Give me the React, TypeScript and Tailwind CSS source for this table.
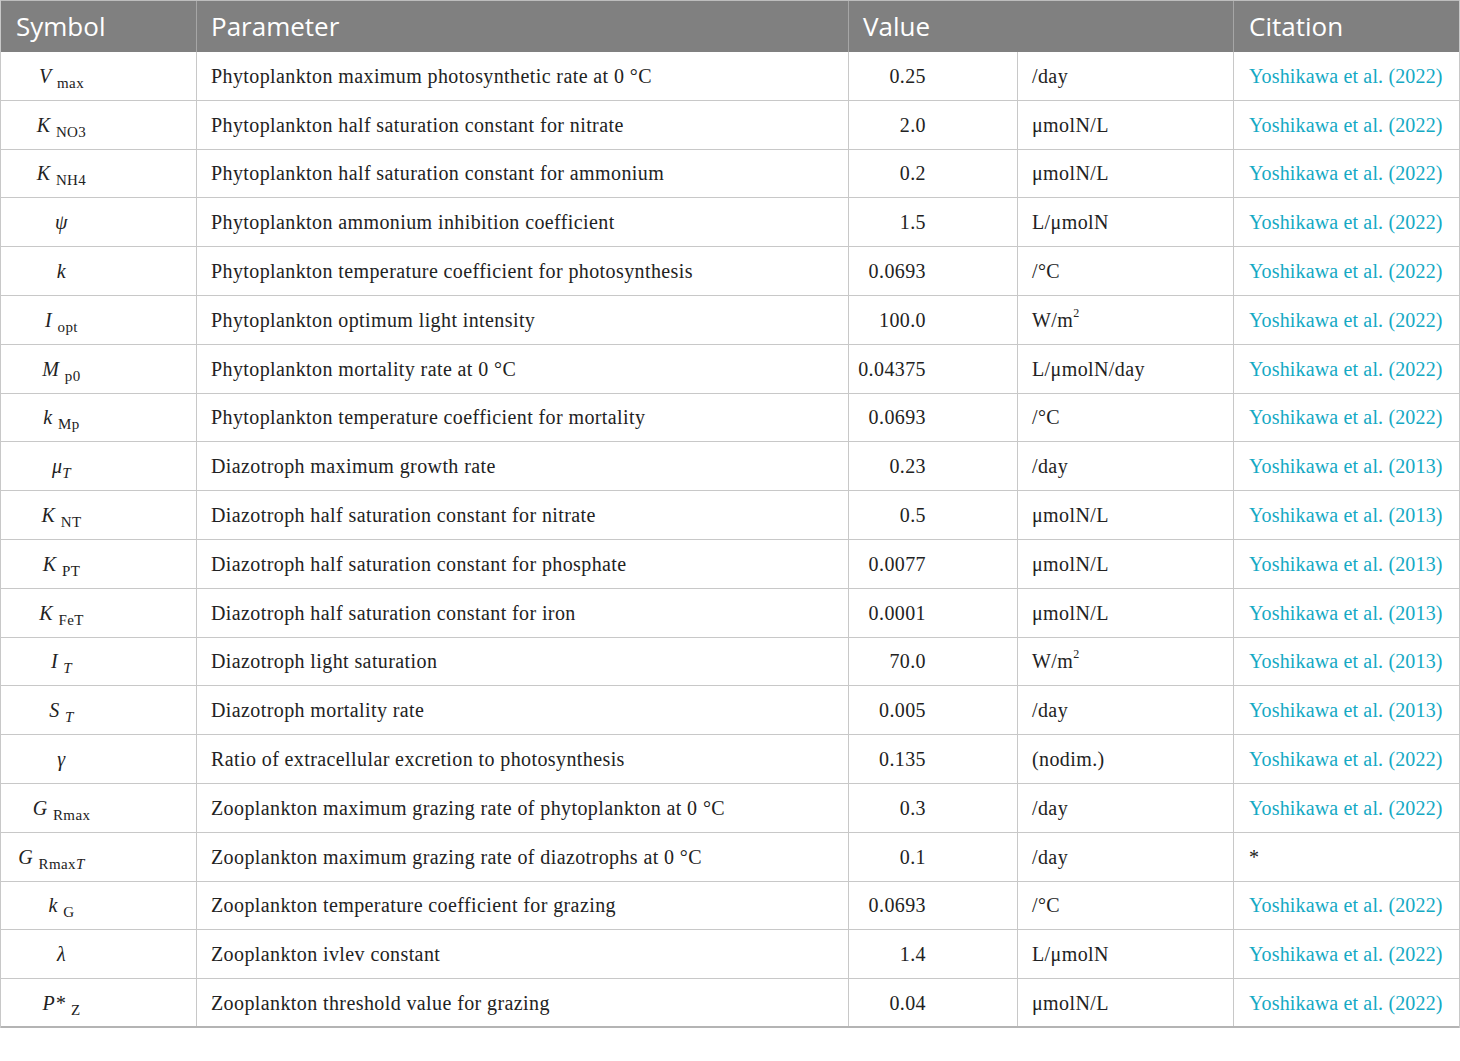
import { ReactNode } from 'react';

// --- Data ---

type Row = {
  symbol: ReactNode;
  param: string;
  value: string;
  unit: ReactNode;
  cite: string;
  shift?: string;
};

const Sub = ({ children }: { children: ReactNode }) => (
  <span className="relative top-[5px] text-[15px]">{children}</span>
);

const Sym = ({ main, sub }: { main: ReactNode; sub?: ReactNode }) => (
  <>
    <i>{main}</i>
    {sub && <> <Sub>{sub}</Sub></>}
  </>
);

const Sq = () => <span className="relative -top-[7px] text-[12px]">2</span>;

const Y22 = 'Yoshikawa et al. (2022)';
const Y13 = 'Yoshikawa et al. (2013)';

const rows: Row[] = [
  { symbol: <Sym main="V" sub="max" />, param: 'Phytoplankton maximum photosynthetic rate at 0 °C', value: '0.25', unit: '/day', cite: Y22 },
  { symbol: <Sym main="K" sub="NO3" />, param: 'Phytoplankton half saturation constant for nitrate', value: '2.0', unit: 'μmolN/L', cite: Y22 },
  { symbol: <Sym main="K" sub="NH4" />, param: 'Phytoplankton half saturation constant for ammonium', value: '0.2', unit: 'μmolN/L', cite: Y22 },
  { symbol: <Sym main="ψ" />, param: 'Phytoplankton ammonium inhibition coefficient', value: '1.5', unit: 'L/μmolN', cite: Y22 },
  { symbol: <Sym main="k" />, param: 'Phytoplankton temperature coefficient for photosynthesis', value: '0.0693', unit: '/°C', cite: Y22 },
  { symbol: <Sym main="I" sub="opt" />, param: 'Phytoplankton optimum light intensity', value: '100.0', unit: <>W/m<Sq /></>, cite: Y22 },
  { symbol: <Sym main="M" sub="p0" />, param: 'Phytoplankton mortality rate at 0 °C', value: '0.04375', unit: 'L/μmolN/day', cite: Y22 },
  { symbol: <Sym main="k" sub="Mp" />, param: 'Phytoplankton temperature coefficient for mortality', value: '0.0693', unit: '/°C', cite: Y22 },
  { symbol: <><i>μ</i><Sub><i>T</i></Sub></>, param: 'Diazotroph maximum growth rate', value: '0.23', unit: '/day', cite: Y13 },
  { symbol: <Sym main="K" sub="NT" />, param: 'Diazotroph half saturation constant for nitrate', value: '0.5', unit: 'μmolN/L', cite: Y13 },
  { symbol: <Sym main="K" sub="PT" />, param: 'Diazotroph half saturation constant for phosphate', value: '0.0077', unit: 'μmolN/L', cite: Y13 },
  { symbol: <Sym main="K" sub="FeT" />, param: 'Diazotroph half saturation constant for iron', value: '0.0001', unit: 'μmolN/L', cite: Y13 },
  { symbol: <Sym main="I" sub={<i>T</i>} />, param: 'Diazotroph light saturation', value: '70.0', unit: <>W/m<Sq /></>, cite: Y13 },
  { symbol: <Sym main="S" sub={<i>T</i>} />, param: 'Diazotroph mortality rate', value: '0.005', unit: '/day', cite: Y13 },
  { symbol: <Sym main="γ" />, param: 'Ratio of extracellular excretion to photosynthesis', value: '0.135', unit: '(nodim.)', cite: Y22 },
  { symbol: <Sym main="G" sub="Rmax" />, param: 'Zooplankton maximum grazing rate of phytoplankton at 0 °C', value: '0.3', unit: '/day', cite: Y22 },
  { symbol: <Sym main="G" sub={<>Rmax<i>T</i></>} />, param: 'Zooplankton maximum grazing rate of diazotrophs at 0 °C', value: '0.1', unit: '/day', cite: '*', shift: '-ml-[10px]' },
  { symbol: <Sym main="k" sub="G" />, param: 'Zooplankton temperature coefficient for grazing', value: '0.0693', unit: '/°C', cite: Y22 },
  { symbol: <Sym main="λ" />, param: 'Zooplankton ivlev constant', value: '1.4', unit: 'L/μmolN', cite: Y22 },
  { symbol: <Sym main="P*" sub="Z" />, param: 'Zooplankton threshold value for grazing', value: '0.04', unit: 'μmolN/L', cite: Y22 },
];

// --- Sub-components ---

const HeaderRow = () => (
  <div className="grid grid-cols-[195px_652px_385px_226px] h-[52px] bg-[#808080] text-white text-[26px] font-['Open_Sans',sans-serif] border-t border-[#bdbdbd]">
    <div className="flex items-center pl-[15px]">Symbol</div>
    <div className="flex items-center pl-[14px] border-l border-[#a6a6a6]">Parameter</div>
    <div className="flex items-center pl-[14px] border-l border-[#a6a6a6]">Value</div>
    <div className="flex items-center pl-[15px] border-l border-[#a6a6a6]">Citation</div>
  </div>
);

const BodyRow = ({ row, last }: { row: Row; last: boolean }) => (
  <div className={`grid grid-cols-[195px_652px_169px_216px_226px] h-[48.8px] border-[#c8c8c8] ${last ? 'border-b-2 border-b-[#b4b4b4]' : 'border-b'}`}>
    <div className="flex items-center">
      <div className={`w-[121px] text-center whitespace-nowrap ${row.shift ?? ''}`}>{row.symbol}</div>
    </div>
    <div className="flex items-center pl-[14px] border-l border-[#c8c8c8] whitespace-nowrap">{row.param}</div>
    <div className="flex items-center justify-end pr-[91px] border-l border-[#c8c8c8]">{row.value}</div>
    <div className="flex items-center pl-[14px] border-l border-[#c8c8c8] whitespace-nowrap">{row.unit}</div>
    <div className={`flex items-center pl-[15px] border-l border-[#c8c8c8] whitespace-nowrap tracking-[0.15px] ${row.cite === '*' ? 'text-[#222]' : 'text-[#14a9c4]'}`}>
      {row.cite}
    </div>
  </div>
);

// --- Main Component ---

export default function App() {
  return (
    <div className="w-[1460px] h-[1061px] bg-white">
      <div className="border-x border-[#c8c8c8]">
        <HeaderRow />
        <div className="font-['Liberation_Serif',serif] text-[20px] tracking-[0.4px] text-[#222]">
          {rows.map((row, i) => (
            <BodyRow key={i} row={row} last={i === rows.length - 1} />
          ))}
        </div>
      </div>
    </div>
  );
}
